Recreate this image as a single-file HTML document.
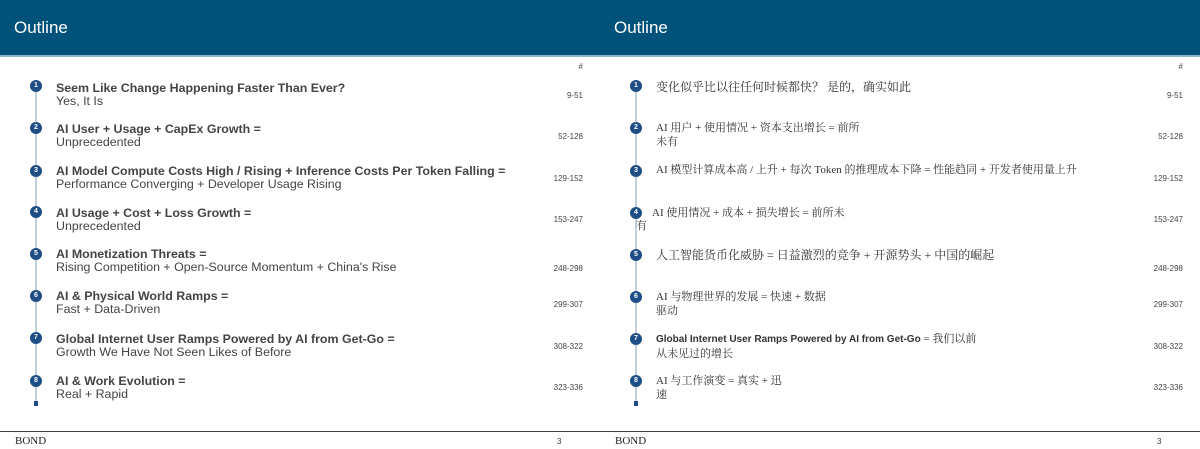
<!DOCTYPE html>
<html><head><meta charset="utf-8"><style>
*{margin:0;padding:0;box-sizing:border-box}
body{width:1200px;height:449px;background:#fff;position:relative;overflow:hidden;font-family:"Liberation Sans","Noto Sans CJK SC",sans-serif;color:#3a3a3a}
.hdr{position:absolute;top:0;height:57px;background:#00527a;border-bottom:2px solid #8fb4cc}
.hdr span{position:absolute;left:14px;top:18px;color:#fff;font-size:17px}
.a{position:absolute;white-space:nowrap}
.c{position:absolute;width:12px;height:12px;border-radius:50%;background:#1f4e86;color:#fff;font-size:7px;font-weight:bold;text-align:center;line-height:12px}
.vl{position:absolute;width:2px;background:#c3cddc}
.t{font-size:12.4px;font-weight:bold;color:#444;line-height:13px}
.s{font-size:12.4px;color:#444;line-height:13px}
.z{font-family:"Liberation Serif","Noto Serif CJK SC",serif;font-size:11px;color:#333;line-height:14px}
.p{font-size:8px;color:#444;text-align:right;width:60px}
.bl{position:absolute;top:431px;height:1px;background:#444}
.bond{position:absolute;top:435px;font-family:"Liberation Serif",serif;font-size:11px;color:#222}
</style></head><body>
<div class="hdr" style="left:0;width:600px"><span>Outline</span></div>
<div class="hdr" style="left:600px;width:600px"><span>Outline</span></div>

<div class="vl" style="left:35px;top:88px;height:316px"></div>
<div class="a" style="left:34px;top:401px;width:4px;height:5px;background:#1f4e86"></div>
<div class="vl" style="left:635px;top:88px;height:316px"></div>
<div class="a" style="left:634px;top:401px;width:4px;height:5px;background:#1f4e86"></div>

<div class="a p" style="left:523px;top:62px">#</div>
<div class="a p" style="left:1123px;top:62px">#</div>

<!-- left -->
<div class="c" style="left:30px;top:80px">1</div>
<div class="a" style="left:56px;top:82px"><div class="t">Seem Like Change Happening Faster Than Ever?</div><div class="s">Yes, It Is</div></div>
<div class="a p" style="left:523px;top:91px">9-51</div>
<div class="c" style="left:30px;top:122px">2</div>
<div class="a" style="left:56px;top:123px"><div class="t">AI User + Usage + CapEx Growth =</div><div class="s">Unprecedented</div></div>
<div class="a p" style="left:523px;top:132px">52-128</div>
<div class="c" style="left:30px;top:165px">3</div>
<div class="a" style="left:56px;top:165px"><div class="t">AI Model Compute Costs High / Rising + Inference Costs Per Token Falling =</div><div class="s">Performance Converging + Developer Usage Rising</div></div>
<div class="a p" style="left:523px;top:174px">129-152</div>
<div class="c" style="left:30px;top:206px">4</div>
<div class="a" style="left:56px;top:207px"><div class="t">AI Usage + Cost + Loss Growth =</div><div class="s">Unprecedented</div></div>
<div class="a p" style="left:523px;top:215px">153-247</div>
<div class="c" style="left:30px;top:248px">5</div>
<div class="a" style="left:56px;top:248px"><div class="t">AI Monetization Threats =</div><div class="s">Rising Competition + Open-Source Momentum + China's Rise</div></div>
<div class="a p" style="left:523px;top:264px">248-298</div>
<div class="c" style="left:30px;top:290px">6</div>
<div class="a" style="left:56px;top:290px"><div class="t">AI &amp; Physical World Ramps =</div><div class="s">Fast + Data-Driven</div></div>
<div class="a p" style="left:523px;top:300px">299-307</div>
<div class="c" style="left:30px;top:332px">7</div>
<div class="a" style="left:56px;top:333px"><div class="t">Global Internet User Ramps Powered by AI from Get-Go =</div><div class="s">Growth We Have Not Seen Likes of Before</div></div>
<div class="a p" style="left:523px;top:342px">308-322</div>
<div class="c" style="left:30px;top:375px">8</div>
<div class="a" style="left:56px;top:375px"><div class="t">AI &amp; Work Evolution =</div><div class="s">Real + Rapid</div></div>
<div class="a p" style="left:523px;top:383px">323-336</div>

<!-- right -->
<div class="c" style="left:630px;top:80px">1</div>
<div class="a z" style="left:656px;top:80px;font-size:12px">变化似乎比以往任何时候都快？ 是的，确实如此</div>
<div class="a p" style="left:1123px;top:91px">9-51</div>
<div class="c" style="left:630px;top:122px">2</div>
<div class="a z" style="left:656px;top:121px">AI 用户 + 使用情况 + 资本支出增长 = 前所<br>未有</div>
<div class="a p" style="left:1123px;top:132px">52-128</div>
<div class="c" style="left:630px;top:165px">3</div>
<div class="a z" style="left:656px;top:163px">AI 模型计算成本高 / 上升 + 每次 Token 的推理成本下降 = 性能趋同 + 开发者使用量上升</div>
<div class="a p" style="left:1123px;top:174px">129-152</div>
<div class="c" style="left:630px;top:207px">4</div>
<div class="a z" style="left:652px;top:206px">AI 使用情况 + 成本 + 损失增长 = 前所未</div>
<div class="a z" style="left:636px;top:219px">有</div>
<div class="a p" style="left:1123px;top:215px">153-247</div>
<div class="c" style="left:630px;top:249px">5</div>
<div class="a z" style="left:656px;top:248px;font-size:12px">人工智能货币化威胁 = 日益激烈的竞争 + 开源势头 + 中国的崛起</div>
<div class="a p" style="left:1123px;top:264px">248-298</div>
<div class="c" style="left:630px;top:291px">6</div>
<div class="a z" style="left:656px;top:290px">AI 与物理世界的发展 = 快速 + 数据<br>驱动</div>
<div class="a p" style="left:1123px;top:300px">299-307</div>
<div class="c" style="left:630px;top:333px">7</div>
<div class="a z" style="left:656px;top:332px"><b style="font-family:'Liberation Sans',sans-serif;font-size:10px">Global Internet User Ramps Powered by AI from Get-Go</b> = 我们以前<br>从未见过的增长</div>
<div class="a p" style="left:1123px;top:342px">308-322</div>
<div class="c" style="left:630px;top:375px">8</div>
<div class="a z" style="left:656px;top:374px">AI 与工作演变 = 真实 + 迅<br>速</div>
<div class="a p" style="left:1123px;top:383px">323-336</div>

<div class="bl" style="left:0;width:600px"></div>
<div class="bl" style="left:600px;width:600px"></div>
<div class="bond" style="left:15px">BOND</div>
<div class="bond" style="left:615px">BOND</div>
<div class="a" style="left:557px;top:437px;font-size:8px">3</div>
<div class="a" style="left:1157px;top:437px;font-size:8px">3</div>
</body></html>
